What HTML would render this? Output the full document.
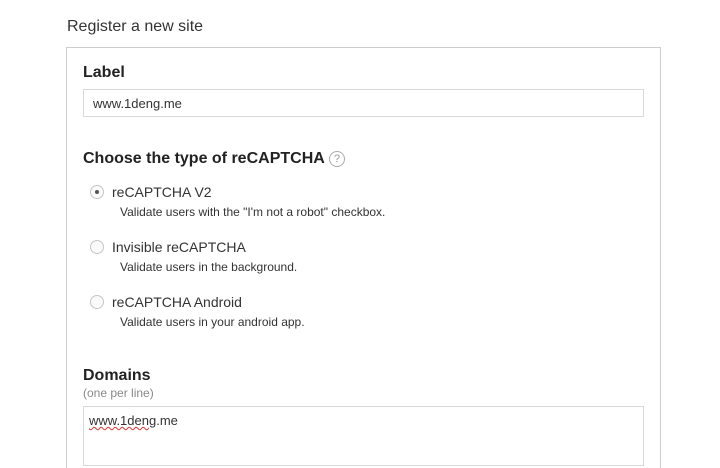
<!DOCTYPE html>
<html><head><style>
body{margin:0;width:720px;height:450px;overflow:hidden;background:#fff;font-family:"Liberation Sans",Arial,sans-serif;color:#222;position:relative}
.a{position:absolute;white-space:nowrap}
.t{left:67px;top:18px;font-size:16px;color:#333}
.box{position:absolute;left:66px;top:47px;width:593px;height:420px;border:1px solid #ccc;border-bottom:none}
.h{font-weight:bold;font-size:16px;color:#222}
.inp{position:absolute;left:83px;width:561px;border:1px solid #d9d9d9;font-size:13px;color:#333;box-sizing:border-box}
.r{position:absolute;left:90px;width:14px;height:14px;border:1px solid #c6c6c6;border-radius:50%;box-sizing:border-box;background:#fafafa}
.rl{font-size:14px;left:112px;color:#333}
.d{font-size:12px;left:120px;color:#333}
</style></head><body>
<div class="a t">Register a new site</div>
<div class="box"></div>
<div class="a h" style="left:83px;top:64px">Label</div>
<div class="inp" style="top:89px;height:28px;padding:6px 0 0 9px">www.1deng.me</div>
<div class="a h" style="left:83px;top:150px">Choose the type of reCAPTCHA</div>
<div class="a" style="left:329px;top:151px;width:16px;height:16px;border:1px solid #aaa;border-radius:50%;box-sizing:border-box;font-size:11px;color:#999;text-align:center;line-height:14px">?</div>
<div class="r" style="top:185px"><div style="position:absolute;left:4px;top:4px;width:4px;height:4px;border-radius:50%;background:#555"></div></div>
<div class="a rl" style="top:184px">reCAPTCHA V2</div>
<div class="a d" style="top:205px">Validate users with the "I'm not a robot" checkbox.</div>
<div class="r" style="top:240px"></div>
<div class="a rl" style="top:239px">Invisible reCAPTCHA</div>
<div class="a d" style="top:260px">Validate users in the background.</div>
<div class="r" style="top:295px"></div>
<div class="a rl" style="top:294px">reCAPTCHA Android</div>
<div class="a d" style="top:315px">Validate users in your android app.</div>
<div class="a h" style="left:83px;top:367px">Domains</div>
<div class="a" style="left:83px;top:386px;font-size:12px;color:#888">(one per line)</div>
<div class="inp" style="top:406px;height:60px;padding:6px 0 0 5px"><span style="text-decoration:underline wavy #d33;text-decoration-thickness:1px">www.1deng</span>.me</div>
</body></html>
